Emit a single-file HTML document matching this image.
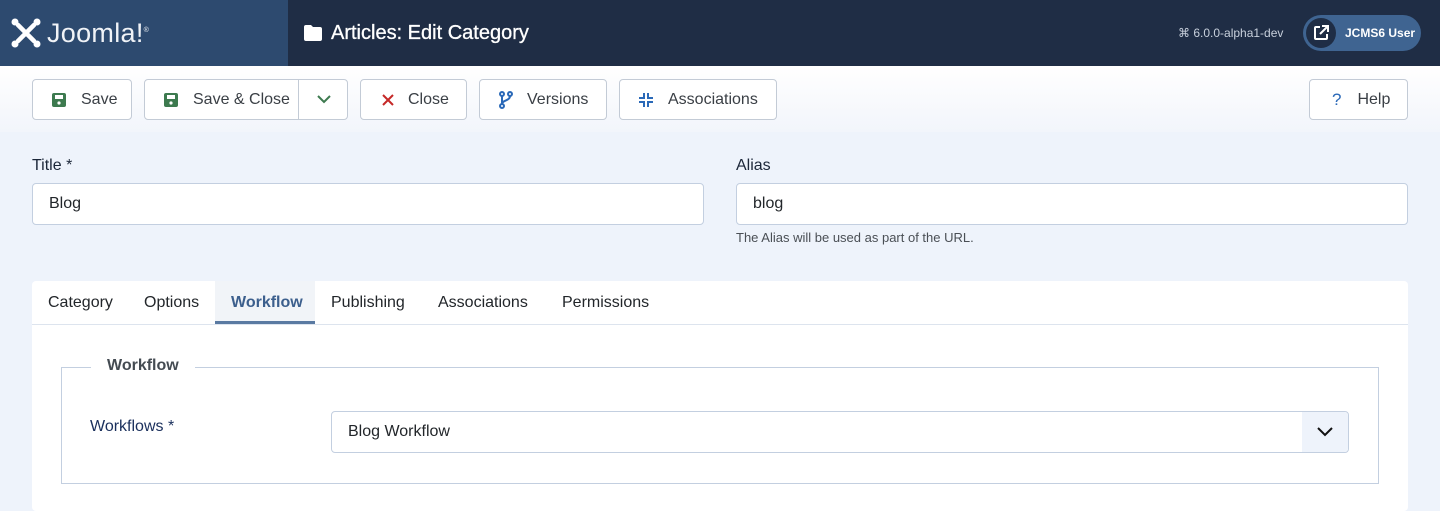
<!DOCTYPE html>
<html><head><meta charset="utf-8"><style>
*{box-sizing:border-box;margin:0;padding:0}
body{width:1440px;height:500px;overflow:hidden;background:#eef3fb;font-family:"Liberation Sans",Arial,sans-serif;color:#22262a;position:relative}
.abs{position:absolute}
.hdr{left:0;top:0;width:1440px;height:66px;background:#1f2d45}
.logo{left:0;top:0;width:288px;height:66px;background:#2d4a6f}
.tb{left:0;top:66px;width:1440px;height:66px;background:linear-gradient(#fff,#f2f5fb)}
.btn{position:absolute;top:79px;height:41px;border:1px solid #c3cbd6;border-radius:4px;background:#fff;font-size:16px;color:#3a3f45;display:flex;align-items:center}
.btn svg{margin-right:14px}
label{position:absolute;font-size:16px;color:#1b2638}
.inp{position:absolute;height:42px;border:1px solid #c3cfe0;border-radius:4px;background:#fff;font-size:16px;padding-left:16px;display:flex;align-items:center;color:#22262a}
.card{left:32px;top:281px;width:1376px;height:230px;background:#fff;border-radius:4px}
.tab{position:absolute;top:281px;height:43px;font-size:16px;display:flex;align-items:center;color:#22262a}
</style></head><body>
<div class="abs hdr"></div>
<div class="abs logo"></div>
<svg class="abs" style="left:10px;top:17px" width="32" height="32" viewBox="0 0 32 32" fill="none" stroke="#fff" stroke-width="4.5" stroke-linecap="round"><path d="M8 8 L24 24 M24 8 L8 24"/><circle cx="5" cy="5" r="3.5" fill="#fff" stroke="none"/><circle cx="27" cy="5" r="3.5" fill="#fff" stroke="none"/><circle cx="5" cy="27" r="3.5" fill="#fff" stroke="none"/><circle cx="27" cy="27" r="3.5" fill="#fff" stroke="none"/></svg>
<div class="abs" style="left:47px;top:18px;font-size:27px;color:#f0f3f7;letter-spacing:0.3px">Joomla!<sup style="font-size:7px">®</sup></div>
<svg class="abs" style="left:304px;top:25px" width="18" height="16" viewBox="0 0 18 16"><path d="M0 2a2 2 0 0 1 2-2h5l2 2h7a2 2 0 0 1 2 2v10a2 2 0 0 1-2 2H2a2 2 0 0 1-2-2z" fill="#fff"/></svg>
<div class="abs" style="left:331px;top:22px;font-size:20px;color:#fff;-webkit-text-stroke:0.3px #fff">Articles: Edit Category</div>
<div class="abs" style="left:1178px;top:26px;font-size:12px;color:#c8d0dc">⌘ 6.0.0-alpha1-dev</div>
<div class="abs" style="left:1303px;top:15px;width:118px;height:36px;border-radius:18px;background:#3f6491"></div>
<div class="abs" style="left:1306px;top:18px;width:30px;height:30px;border-radius:15px;background:#1f2d45"></div>
<svg class="abs" style="left:1313px;top:25px" width="16" height="16" viewBox="0 0 16 16" fill="none" stroke="#fff" stroke-width="2"><path d="M7 2H3a1 1 0 0 0-1 1v10a1 1 0 0 0 1 1h10a1 1 0 0 0 1-1V9M9 1h6v6M15 1 7 9"/></svg>
<div class="abs" style="left:1345px;top:26px;font-size:12px;font-weight:bold;color:#fff">JCMS6 User</div>
<div class="abs tb"></div>
<div class="btn" style="left:32px;width:100px;padding-left:18px"><svg width="16" height="16" viewBox="0 0 16 16"><rect x="1" y="1" width="14" height="14" rx="2" fill="#3d7a4f"/><rect x="4" y="3" width="8" height="4" fill="#fff"/><circle cx="8" cy="11" r="1.6" fill="#fff"/></svg>Save</div>
<div class="btn" style="left:144px;width:204px;padding-left:18px"><svg width="16" height="16" viewBox="0 0 16 16"><rect x="1" y="1" width="14" height="14" rx="2" fill="#3d7a4f"/><rect x="4" y="3" width="8" height="4" fill="#fff"/><circle cx="8" cy="11" r="1.6" fill="#fff"/></svg>Save &amp; Close<div style="position:absolute;left:153px;top:0;height:39px;border-left:1px solid #c3cbd6"></div><svg style="position:absolute;left:172px;top:14px" width="14" height="10" viewBox="0 0 14 10" fill="none" stroke="#3d7a4f" stroke-width="2"><path d="M1 2l6 6 6-6"/></svg></div>
<div class="btn" style="left:360px;width:107px;padding-left:21px"><svg width="12" height="12" viewBox="0 0 12 12" stroke="#c52827" stroke-width="2"><path d="M1 1l10 10M11 1 1 11"/></svg>Close</div>
<div class="btn" style="left:479px;width:128px;padding-left:19px"><svg width="14" height="18" viewBox="0 0 14 18" fill="none" stroke="#2a69b8" stroke-width="2"><circle cx="3" cy="3" r="2"/><circle cx="3" cy="15" r="2"/><circle cx="11" cy="3" r="2"/><path d="M3 5v8M11 5c0 5-8 4-8 8"/></svg>Versions</div>
<div class="btn" style="left:619px;width:158px;padding-left:18px"><svg width="16" height="16" viewBox="0 0 16 16" fill="none" stroke="#2a69b8" stroke-width="2"><path d="M6 1v5H1M10 1v5h5M6 15v-5H1M10 15v-5h5"/></svg>Associations</div>
<div class="btn" style="left:1309px;width:99px;padding-left:22px"><span style="color:#2a69b8;font-size:17px;margin-right:16px">?</span>Help</div>
<label style="left:32px;top:157px">Title *</label>
<div class="inp" style="left:32px;top:183px;width:672px">Blog</div>
<label style="left:736px;top:157px">Alias</label>
<div class="inp" style="left:736px;top:183px;width:672px">blog</div>
<div class="abs" style="left:736px;top:230px;font-size:13px;color:#4a4f55">The Alias will be used as part of the URL.</div>
<div class="abs card"></div>
<div class="abs" style="left:32px;top:324px;width:1376px;border-top:1px solid #dde4ee"></div>
<div class="abs" style="left:215px;top:281px;width:100px;height:43px;background:#f1f4f8;border-bottom:3px solid #5a7aa2"></div>
<div class="tab" style="left:48px">Category</div>
<div class="tab" style="left:144px">Options</div>
<div class="tab" style="left:231px;color:#3c5f8d;font-weight:bold">Workflow</div>
<div class="tab" style="left:331px">Publishing</div>
<div class="tab" style="left:438px">Associations</div>
<div class="tab" style="left:562px">Permissions</div>
<div class="abs" style="left:61px;top:367px;width:1318px;height:117px;border:1px solid #c3cfe0"></div>
<div class="abs" style="left:91px;top:357px;padding:0 16px;background:#fff;font-size:16px;font-weight:bold;color:#444b52">Workflow</div>
<label style="left:90px;top:418px;color:#1a2f5c">Workflows *</label>
<div class="inp" style="left:331px;top:411px;width:1018px;height:42px">Blog Workflow</div>
<div class="abs" style="left:1302px;top:412px;width:46px;height:40px;background:#eef3fb;border-radius:0 4px 4px 0"></div>
<svg class="abs" style="left:1317px;top:427px" width="16" height="10" viewBox="0 0 16 10" fill="none" stroke="#111" stroke-width="2"><path d="M1 1l7 7 7-7"/></svg>
</body></html>
